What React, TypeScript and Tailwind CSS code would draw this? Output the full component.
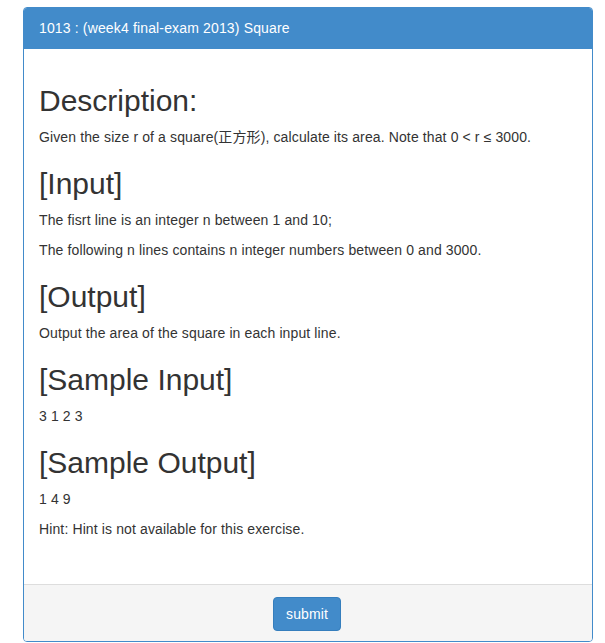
const sections: { title: string; lines: React.ReactNode[] }[] = [
  {
    title: 'Description:',
    lines: ['Given the size r of a square(正方形), calculate its area. Note that 0 < r ≤ 3000.'],
  },
  {
    title: '[Input]',
    lines: [
      'The fisrt line is an integer n between 1 and 10;',
      'The following n lines contains n integer numbers between 0 and 3000.',
    ],
  },
  { title: '[Output]', lines: ['Output the area of the square in each input line.'] },
  { title: '[Sample Input]', lines: ['3 1 2 3'] },
  { title: '[Sample Output]', lines: ['1 4 9', 'Hint: Hint is not available for this exercise.'] },
];

export default function App() {
  return (
    <div
      className="min-h-[643px] bg-white text-[#333] text-[14px] leading-[20px] tracking-[0.12px]"
      style={{ fontFamily: '"Liberation Sans", Arial, "Noto Sans CJK SC", sans-serif' }}
    >
      <div className="pt-[7px] pl-[23px]">
        <div className="w-[570px] border border-[#428bca] rounded-[4px] overflow-hidden">
          {/* Heading */}
          <div className="bg-[#428bca] text-white px-[15px] py-[10px] border-b border-[#428bca]">
            <h3 className="text-[14px] leading-[20px] tracking-[0.15px]">1013 : (week4 final-exam 2013) Square</h3>
          </div>

          {/* Body */}
          <div className="px-[15px] pt-[15px] pb-[35px]">
            {sections.map((s) => (
              <div key={s.title}>
                <h2 className="text-[30px] leading-[33px] font-normal tracking-normal mt-[20px] mb-[10px]">
                  {s.title}
                </h2>
                {s.lines.map((line, j) => (
                  <p key={j} className="mb-[10px]">
                    {line}
                  </p>
                ))}
              </div>
            ))}
          </div>

          {/* Footer */}
          <div className="bg-[#f5f5f5] border-t border-[#ddd] px-[15px] pt-[12px] pb-[10px] flex justify-center">
            <button className="bg-[#428bca] border border-[#357ebd] text-white rounded-[4px] px-[12px] py-[6px] text-[14px] leading-[20px] -translate-x-px">
              submit
            </button>
          </div>
        </div>
      </div>
    </div>
  );
}
